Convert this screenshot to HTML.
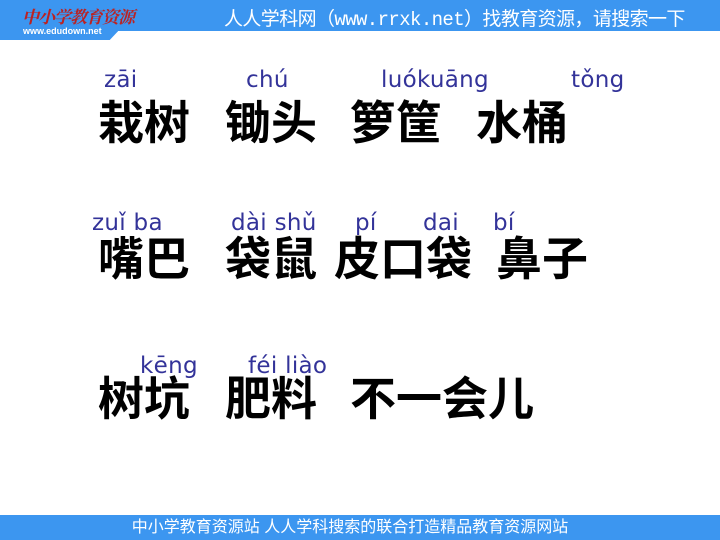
<!DOCTYPE html>
<html><head><meta charset="utf-8"><style>
body{margin:0;width:720px;height:540px;position:relative;overflow:hidden;background:#fff}
.h{position:absolute;left:0;top:0;width:720px;height:31px;background:#3c96f0}
.lg{position:absolute;left:0;top:0;width:118px;height:40px;background:#3c96f0;clip-path:polygon(0 0,100% 0,100% 78%,93% 100%,0 100%)}
.f{position:absolute;left:0;top:515px;width:700px;height:25px;padding-right:20px;background:#3c96f0;color:#fff;font:16px "Liberation Sans","Noto Sans CJK SC",sans-serif;text-align:center;line-height:25px}
.c{position:absolute;font:bold 46px/1 "Liberation Sans","Noto Sans CJK SC",sans-serif;color:#000;white-space:nowrap}
.p{position:absolute;font:23px/1 "DejaVu Sans",sans-serif;color:#333399;white-space:nowrap;letter-spacing:0.3px}
</style></head><body>
<div class="h"></div>
<div class="lg"></div>
<div style="position:absolute;left:22px;top:3px;color:#b22;font:bold italic 17px 'Noto Serif CJK SC',serif;letter-spacing:-1px">中小学教育资源</div>
<div style="position:absolute;left:23px;top:26px;color:#fff;font:bold 9px 'Liberation Sans',sans-serif">www.edudown.net</div>
<div style="position:absolute;left:224px;top:4px;color:#fff;font:19px 'Liberation Mono','Noto Sans CJK SC',monospace;white-space:nowrap;letter-spacing:-0.6px">人人学科网（www.rrxk.net）找教育资源，请搜索一下</div>
<div class="p" style="left:104px;top:69px">zāi</div>
<div class="p" style="left:246px;top:69px">chú</div>
<div class="p" style="left:381px;top:69px">luókuāng</div>
<div class="p" style="left:571px;top:69px">tǒng</div>
<div class="c" style="left:98px;top:100px">栽树</div>
<div class="c" style="left:225px;top:100px">锄头</div>
<div class="c" style="left:350px;top:100px">箩筐</div>
<div class="c" style="left:476px;top:100px">水桶</div>
<div class="p" style="left:92px;top:212px">zuǐ ba</div>
<div class="p" style="left:231px;top:212px">dài shǔ</div>
<div class="p" style="left:355px;top:212px">pí</div>
<div class="p" style="left:423px;top:212px">dai</div>
<div class="p" style="left:493px;top:212px">bí</div>
<div class="c" style="left:98px;top:236px">嘴巴</div>
<div class="c" style="left:225px;top:236px">袋鼠</div>
<div class="c" style="left:334px;top:236px">皮口袋</div>
<div class="c" style="left:496px;top:236px">鼻子</div>
<div class="p" style="left:140px;top:355px">kēng</div>
<div class="p" style="left:248px;top:355px">féi liào</div>
<div class="c" style="left:98px;top:376px">树坑</div>
<div class="c" style="left:225px;top:376px">肥料</div>
<div class="c" style="left:350px;top:376px">不一会儿</div>
<div class="f">中小学教育资源站 人人学科搜索的联合打造精品教育资源网站</div>
</body></html>
